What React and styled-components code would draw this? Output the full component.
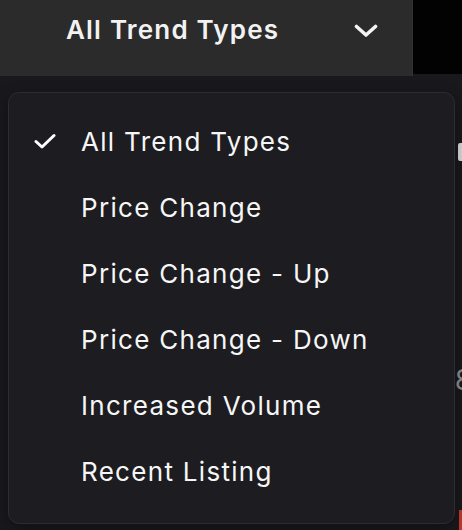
import React from "react";
import styled, { createGlobalStyle } from "styled-components";

const GlobalStyle = createGlobalStyle`
  html, body {
    margin: 0;
    padding: 0;
    background: #19191d;
  }
  body {
    font-family: Inter, "Noto Sans", sans-serif;
    color: #ffffff;
  }
`;

const options = [
  "All Trend Types",
  "Price Change",
  "Price Change - Up",
  "Price Change - Down",
  "Increased Volume",
  "Recent Listing",
];

const App = () => {
  const selected = "All Trend Types";

  return (
    <Page>
      <GlobalStyle />
      <TopBar>
        <Select>
          <SelectLabel>{selected}</SelectLabel>
          <Chevron viewBox="0 0 24 14">
            <path d="M2.5 2.5 L12 11 L21.5 2.5" />
          </Chevron>
        </Select>
        <Blackout />
      </TopBar>

      {/* stuff under the open menu, only the edges peek out */}
      <Behind>
        <BehindRow $h={64}>
          <Pill />
        </BehindRow>
        <BehindRow $h={166} />
        <BehindRow $h={60}>
          <Digit>8</Digit>
        </BehindRow>
        <BehindRow $h={120} $end>
          <RedBar />
        </BehindRow>
      </Behind>

      <Menu>
        {options.map((opt) => (
          <Item key={opt}>
            <CheckSlot>
              {opt === selected && (
                <Check viewBox="0 0 22 16">
                  <path d="M2 8.5 L8 14 L20 2.5" />
                </Check>
              )}
            </CheckSlot>
            <ItemText>{opt}</ItemText>
          </Item>
        ))}
      </Menu>
    </Page>
  );
};

const Page = styled.div`
  position: relative;
  width: 462px;
  height: 530px;
  overflow: hidden;
  background: #19191d;
`;

const TopBar = styled.div`
  display: flex;
  align-items: flex-start;
  height: 76px;
`;

const Select = styled.div`
  width: 413px;
  height: 76px;
  box-sizing: border-box;
  padding: 0 34px 17px 66px;
  display: flex;
  align-items: center;
  justify-content: space-between;
  background: #2b2b2b;
  border-right: 1px solid #333335;
`;

const SelectLabel = styled.div`
  font-size: 26px;
  font-weight: 600;
  letter-spacing: 1.2px;
  color: #f2f2f2;
`;

const Chevron = styled.svg`
  width: 24px;
  height: 14px;
  margin-top: 2px;
  fill: none;
  stroke: #f4f4f4;
  stroke-width: 3.6;
  stroke-linecap: round;
  stroke-linejoin: round;
`;

const Blackout = styled.div`
  flex: 1;
  height: 74px;
  background: #020202;
`;

const Behind = styled.div`
  display: flex;
  flex-direction: column;
  padding-top: 44px;
`;

const BehindRow = styled.div`
  height: ${(p) => p.$h}px;
  display: flex;
  justify-content: flex-end;
  align-items: ${(p) => (p.$end ? "flex-end" : "center")};
`;

const Pill = styled.div`
  width: 8px;
  height: 18px;
  margin-right: -4px;
  border-radius: 2px;
  background: #d6d6d6;
`;

const Digit = styled.div`
  margin-right: -10px;
  font-size: 28px;
  color: #8a8a8e;
`;

const RedBar = styled.div`
  width: 3px;
  height: 20px;
  background: #c0392b;
`;

const Menu = styled.div`
  position: absolute;
  top: 92px;
  left: 8px;
  width: 447px;
  box-sizing: border-box;
  padding: 15px 0 19px;
  display: flex;
  flex-direction: column;
  background: #1d1d21;
  border: 1px solid #2c2c31;
  border-radius: 11px;
  box-shadow: 0 4px 14px rgba(0, 0, 0, 0.35);
`;

const Item = styled.div`
  height: 66px;
  display: flex;
  align-items: center;
`;

const CheckSlot = styled.div`
  width: 72px;
  padding-left: 25px;
  box-sizing: border-box;
  display: flex;
  align-items: center;
`;

const Check = styled.svg`
  width: 22px;
  height: 16px;
  fill: none;
  stroke: #ffffff;
  stroke-width: 3;
  stroke-linecap: round;
  stroke-linejoin: round;
`;

const ItemText = styled.div`
  font-size: 26px;
  font-weight: 400;
  letter-spacing: 1.3px;
  color: #f6f6f6;
`;

export default App;
